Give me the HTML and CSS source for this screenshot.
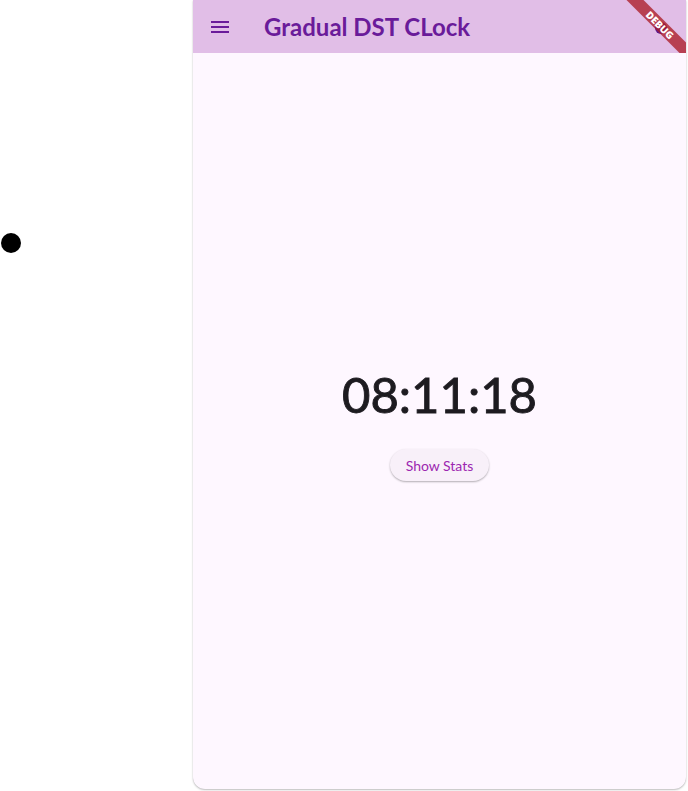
FILE: index.html
```html
<!DOCTYPE html>
<html>
<head>
<meta charset="utf-8">
<link rel="stylesheet" href="styles.css">
</head>
<body>
<div class="page">
  <div class="side">
    <div class="dot"></div>
  </div>
  <div class="panel">
    <header class="appbar">
      <button class="menu" aria-label="menu">
        <svg width="24" height="24" viewBox="0 0 24 24"><path d="M3 18h18v-2H3v2zm0-5h18v-2H3v2zm0-7v2h18V6H3z" fill="#6a1b9a"/></svg>
      </button>
      <h1 class="title">Gradual DST CLock</h1>
      <div class="blob"></div>
      <div class="ribbon"><span>DEBUG</span></div>
    </header>
    <main class="content">
      <div class="clock">08:11:18</div>
      <button class="stats">Show Stats</button>
    </main>
  </div>
</div>
</body>
</html>
```
FILE: styles.css
```css
html, body {
  margin: 0;
  padding: 0;
  background: #ffffff;
}
body {
  width: 688px;
  height: 791px;
  overflow: hidden;
  font-family: Lato, "Noto Sans", sans-serif;
}
.page {
  display: flex;
  height: 791px;
}
.side {
  width: 193px;
  flex: none;
  position: relative;
}
.dot {
  position: absolute;
  left: 1px;
  top: 233px;
  width: 20px;
  height: 20px;
  border-radius: 50%;
  background: #000;
}
.panel {
  width: 493px;
  height: 789px;
  flex: none;
  background: #fef7ff;
  border-radius: 0 0 12px 12px;
  box-shadow: 0 1px 2px rgba(0,0,0,0.25), 0 0 1px rgba(0,0,0,0.15);
  display: flex;
  flex-direction: column;
  overflow: hidden;
}
.appbar {
  position: relative;
  height: 53px;
  flex: none;
  background: #e1bee7;
  display: flex;
  align-items: center;
  overflow: hidden;
}
.menu {
  width: 56px;
  height: 53px;
  border: none;
  background: transparent;
  padding: 0 0 0 15px;
  display: flex;
  align-items: center;
  justify-content: flex-start;
}
.menu svg { display: block; }
.title {
  margin: 0 0 0 15px;
  font-size: 24px;
  font-weight: 700;
  color: #6a1b9a;
  line-height: 28px;
}
.blob {
  position: absolute;
  left: 462px;
  top: 22px;
  width: 12px;
  height: 12px;
  border-radius: 50%;
  background: #5e1a8c;
}
.ribbon {
  position: absolute;
  left: 422px;
  top: 19px;
  width: 90px;
  height: 12px;
  background: rgba(170, 28, 40, 0.78);
  transform: rotate(45deg);
  display: flex;
  align-items: center;
  justify-content: center;
}
.ribbon span {
  color: #fff;
  font-family: "Open Sans", "DejaVu Sans", sans-serif;
  font-size: 10px;
  font-weight: 800;
  line-height: 12px;
}
.content {
  flex: 1;
  display: flex;
  flex-direction: column;
  align-items: center;
  justify-content: center;
  padding-top: 4px;
}
.clock {
  font-size: 49px;
  line-height: 58px;
  color: #1d1b20;
  font-weight: 400;
  -webkit-text-stroke: 0.9px #1d1b20;
}
.stats {
  margin-top: 26px;
  height: 32px;
  padding: 0 16px;
  border: none;
  border-radius: 16px;
  background: #f8f0f9;
  box-shadow: 0 1px 2px rgba(0,0,0,0.3);
  color: #9c27b0;
  font-family: Lato, sans-serif;
  font-size: 14px;
}
```
